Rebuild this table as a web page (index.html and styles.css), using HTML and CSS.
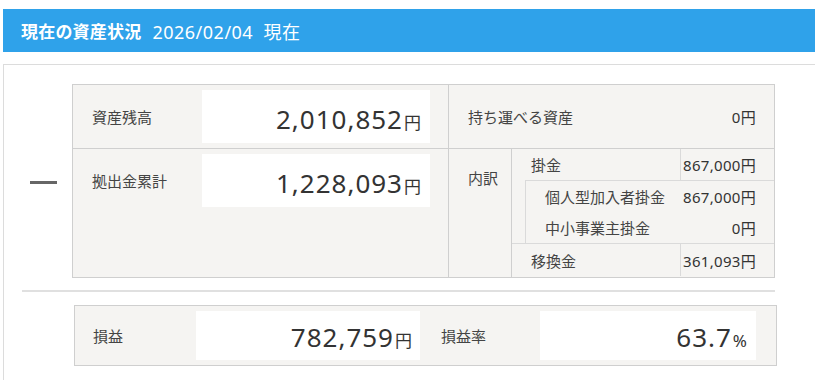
FILE: index.html
```html
<!DOCTYPE html>
<html lang="ja">
<head>
<meta charset="utf-8">
<title>現在の資産状況</title>
<link rel="stylesheet" href="styles.css">
</head>
<body>
  <header class="title-bar">
    <h1 class="title">現在の資産状況</h1>
    <span class="as-of">2026/02/04&nbsp;&nbsp;現在</span>
  </header>

  <section class="panel">
    <div class="summary">
      <div class="toggle"><span class="toggle-bar"></span></div>

      <div class="sheet">
        <div class="cell cell-left cell-top">
          <div class="pair">
            <span class="label">資産残高</span>
            <span class="amount">2,010,852<small class="unit">円</small></span>
          </div>
        </div>
        <div class="cell cell-right cell-top portable">
          <span class="label">持ち運べる資産</span>
          <span class="small-value">0円</span>
        </div>

        <div class="cell cell-left">
          <div class="pair">
            <span class="label">拠出金累計</span>
            <span class="amount">1,228,093<small class="unit">円</small></span>
          </div>
        </div>
        <div class="cell cell-right breakdown">
          <div class="breakdown-label">内訳</div>
          <div class="sub">
            <div class="sub-row">
              <span class="sub-label">掛金</span>
              <span class="sub-value">867,000円</span>
            </div>
            <div class="sub-group">
              <div class="nested">
                <div class="nested-row">
                  <span class="sub-label">個人型加入者掛金</span>
                  <span class="sub-value">867,000円</span>
                </div>
                <div class="nested-row">
                  <span class="sub-label">中小事業主掛金</span>
                  <span class="sub-value">0円</span>
                </div>
              </div>
            </div>
            <div class="sub-row">
              <span class="sub-label">移換金</span>
              <span class="sub-value">361,093円</span>
            </div>
          </div>
        </div>
      </div>
    </div>

    <hr class="divider">

    <div class="profit">
      <span class="label profit-label">損益</span>
      <span class="amount profit-box">782,759<small class="unit">円</small></span>
      <span class="label profit-label rate-label">損益率</span>
      <span class="amount rate-box">63.7<small class="unit">%</small></span>
    </div>
  </section>
</body>
</html>
```

FILE: styles.css
```css
html {
  overflow: hidden;
}

body {
  margin: 0;
  font-family: "Noto Sans", "Noto Sans CJK JP", sans-serif;
  color: #333;
  background: #fff;
}

/* heading bar */
.title-bar {
  margin: 9px 0 0 3px;
  height: 43px;
  background: #2fa2ea;
  color: #fff;
  display: flex;
  align-items: center;
  padding-left: 18px;
  gap: 11px;
}

.title {
  margin: 0;
  font-size: 17px;
  font-weight: bold;
  letter-spacing: 0.2px;
}

.as-of {
  font-size: 18px;
  letter-spacing: 0.5px;
}

/* white panel holding the figures */
.panel {
  margin: 12px -40px 0 3px;
  border: 1px solid #dcdcdc;
  border-bottom: none;
  padding: 19px 0 14px;
}

.summary {
  display: flex;
  align-items: center;
}

.toggle {
  width: 68px;
  display: flex;
  padding-left: 26px;
  padding-top: 2px;
  box-sizing: border-box;
}

.toggle-bar {
  display: block;
  width: 27px;
  height: 3px;
  background: #666;
}

.sheet {
  width: 703px;
  box-sizing: border-box;
  border: 1px solid #cfcfcf;
  background: #f5f4f2;
  display: grid;
  grid-template-columns: 376px 325px;
  grid-template-rows: 64px 128px;
}

.cell {
  box-sizing: border-box;
}

.cell-left {
  border-right: 1px solid #cfcfcf;
  padding-top: 5px;
}

.cell-top {
  border-bottom: 1px solid #cfcfcf;
}

.pair {
  display: flex;
  align-items: center;
}

.label {
  font-size: 15px;
  color: #444;
}

.pair .label {
  width: 129px;
  padding-left: 19px;
  box-sizing: border-box;
}

.amount {
  background: #fff;
  display: flex;
  align-items: baseline;
  justify-content: flex-end;
  box-sizing: border-box;
  font-size: 26px;
  letter-spacing: 1px;
  color: #333;
}

.pair .amount {
  width: 228px;
  height: 53px;
  padding: 11px 9px 0 0;
}

.unit {
  font-size: 17px;
  letter-spacing: 0;
  margin-left: 1px;
}

/* right half */
.portable {
  display: flex;
  align-items: center;
  justify-content: space-between;
  padding: 0 18px 0 19px;
}

.small-value,
.sub-value {
  font-size: 15px;
  letter-spacing: 0.3px;
  white-space: nowrap;
}

.breakdown {
  display: flex;
}

.breakdown-label {
  width: 63px;
  box-sizing: border-box;
  border-right: 1px solid #cfcfcf;
  padding: 18px 0 0 19px;
  font-size: 15px;
  color: #444;
}

.sub {
  flex: 1;
  display: flex;
  flex-direction: column;
}

.sub-label {
  font-size: 15px;
  color: #444;
  white-space: nowrap;
}

.sub-row {
  display: grid;
  grid-template-columns: 169px 1fr;
  height: 31px;
  align-items: center;
}

.sub-row .sub-label {
  height: 100%;
  display: flex;
  align-items: center;
  padding-left: 19px;
  border-right: 1px solid #dadada;
  box-sizing: border-box;
}

.sub-row:last-child {
  height: 32px;
}

.sub-value {
  text-align: right;
  padding-right: 18px;
}

.sub-group {
  border-bottom: 1px solid #dadada;
}

.nested {
  margin-left: 13px;
  border-top: 1px solid #dadada;
  border-left: 1px solid #dadada;
}

.nested-row {
  display: grid;
  grid-template-columns: 1fr 93px;
  align-items: center;
  height: 31px;
}

.nested-row .sub-label {
  padding-left: 19px;
}

/* separator between the summary and the profit row */
.divider {
  margin: 12px 0 13px 18px;
  width: 753px;
  height: 2px;
  border: none;
  background: #e0e0e0;
}

.profit {
  margin-left: 70px;
  width: 703px;
  height: 61px;
  box-sizing: border-box;
  border: 1px solid #cfcfcf;
  background: #f5f4f2;
  display: flex;
  align-items: center;
}

.profit-label {
  width: 121px;
  padding-left: 18px;
  box-sizing: border-box;
}

.rate-label {
  width: 120px;
  padding-left: 21px;
}

.profit-box {
  width: 224px;
  height: 49px;
  padding: 8px 8px 0 0;
}

.rate-box {
  width: 216px;
  height: 49px;
  padding: 8px 9px 0 0;
}
```
